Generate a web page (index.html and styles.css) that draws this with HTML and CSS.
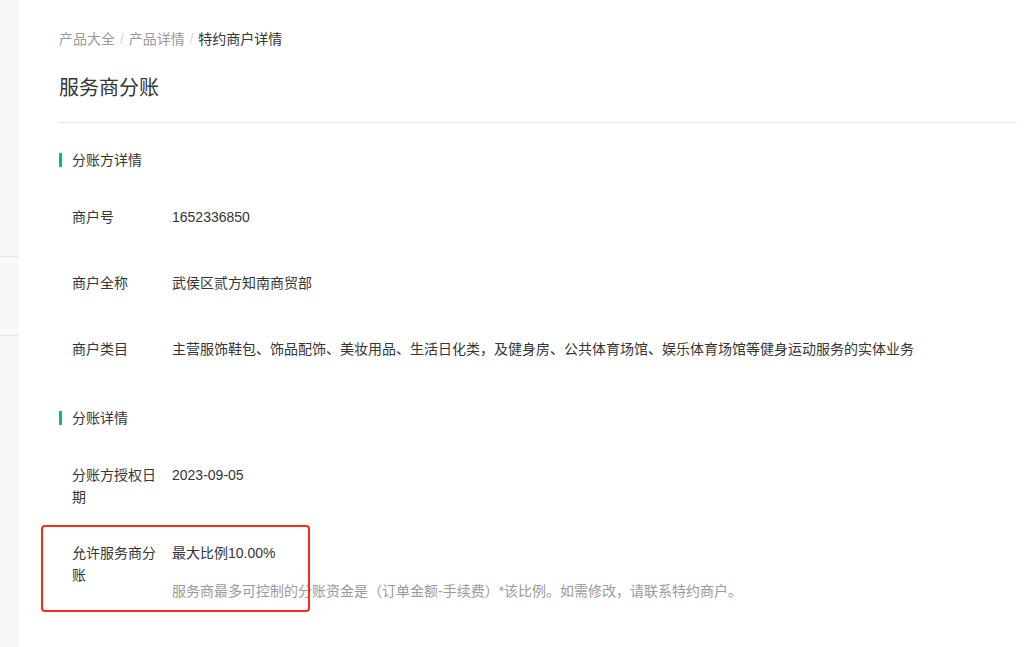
FILE: index.html
```html
<!DOCTYPE html>
<html lang="zh-CN">

<head>
    <meta charset="UTF-8">
    <meta name="viewport" content="width=device-width, initial-scale=1.0">
    <title>服务商分账</title>
    <link rel="stylesheet" href="styles.css">
</head>

<body>
    <div class="layout">
        <div class="side-nav">
            <div class="side-item first"></div>
            <div class="side-item"></div>
        </div>

        <div class="main">
            <div class="breadcrumb">
                <a href="#">产品大全</a>
                <span class="sep">/</span>
                <a href="#">产品详情</a>
                <span class="sep">/</span>
                <span class="current">特约商户详情</span>
            </div>

            <h2 class="page-title">服务商分账</h2>

            <div class="section section-first">
                <h3 class="section-title">分账方详情</h3>
                <div class="info-row">
                    <div class="info-label">商户号</div>
                    <div class="info-value">1652336850</div>
                </div>
                <div class="info-row">
                    <div class="info-label">商户全称</div>
                    <div class="info-value">武侯区贰方知南商贸部</div>
                </div>
                <div class="info-row">
                    <div class="info-label">商户类目</div>
                    <div class="info-value">主营服饰鞋包、饰品配饰、美妆用品、生活日化类，及健身房、公共体育场馆、娱乐体育场馆等健身运动服务的实体业务</div>
                </div>
            </div>

            <div class="section">
                <h3 class="section-title">分账详情</h3>
                <div class="info-row">
                    <div class="info-label">分账方授权日期</div>
                    <div class="info-value">2023-09-05</div>
                </div>
                <div class="info-row marked">
                    <div class="info-label">允许服务商分账</div>
                    <div class="info-value">
                        最大比例10.00%
                        <p class="info-tips">服务商最多可控制的分账资金是（订单金额-手续费）*该比例。如需修改，请联系特约商户。</p>
                    </div>
                    <div class="mark-box"></div>
                </div>
            </div>
        </div>
    </div>
</body>

</html>
```

FILE: styles.css
```css
body {
    margin: 0;
    font-family: "Liberation Sans", "Noto Sans CJK SC", sans-serif;
    font-size: 14px;
    color: #353535;
    background-color: #fff;
}

.layout {
    display: flex;
    min-height: 647px;
}

.side-nav {
    width: 19px;
    flex-shrink: 0;
    background-color: #f8f8f8;
}

.side-item {
    height: 78px;
    border-bottom: 1px solid #e5e5e5;
}

.side-item.first {
    height: 256px;
}

.main {
    flex: 1;
    padding: 28px 9px 0 40px;
}

.breadcrumb {
    line-height: 22px;
    color: #9a9a9a;
}

.breadcrumb a {
    color: #9a9a9a;
    text-decoration: none;
}

.breadcrumb .sep {
    color: #d4d4d4;
    margin: 0 1px;
}

.breadcrumb .current {
    color: #353535;
}

.page-title {
    margin: 24px 0 0;
    padding-bottom: 20px;
    font-size: 20px;
    font-weight: normal;
    line-height: 28px;
    border-bottom: 1px solid #e5e5e5;
}

.section {
    margin-top: 20px;
}

.section-first {
    margin-top: 26px;
}

.section-title {
    position: relative;
    margin: 0 0 18px;
    padding-left: 13px;
    font-size: 14px;
    font-weight: normal;
    line-height: 22px;
}

/* green marker in front of the title */
.section-title::before {
    content: "";
    position: absolute;
    left: 0;
    top: 4px;
    width: 3px;
    height: 14px;
    background-color: #07c160;
}

.info-row {
    display: flex;
    padding: 17px 0 17px 13px;
    line-height: 22px;
}

.info-label {
    width: 88px;
    margin-right: 12px;
    flex-shrink: 0;
    min-height: 32px;
}

.info-value {
    flex: 1;
}

.info-tips {
    margin: 16px 0 0;
    color: #9a9a9a;
}

.marked {
    position: relative;
}

/* red annotation frame drawn over the row */
.mark-box {
    position: absolute;
    left: -18px;
    top: 0;
    width: 265px;
    height: 83px;
    border: 2px solid #fa2a1f;
    border-radius: 4px;
}
```
